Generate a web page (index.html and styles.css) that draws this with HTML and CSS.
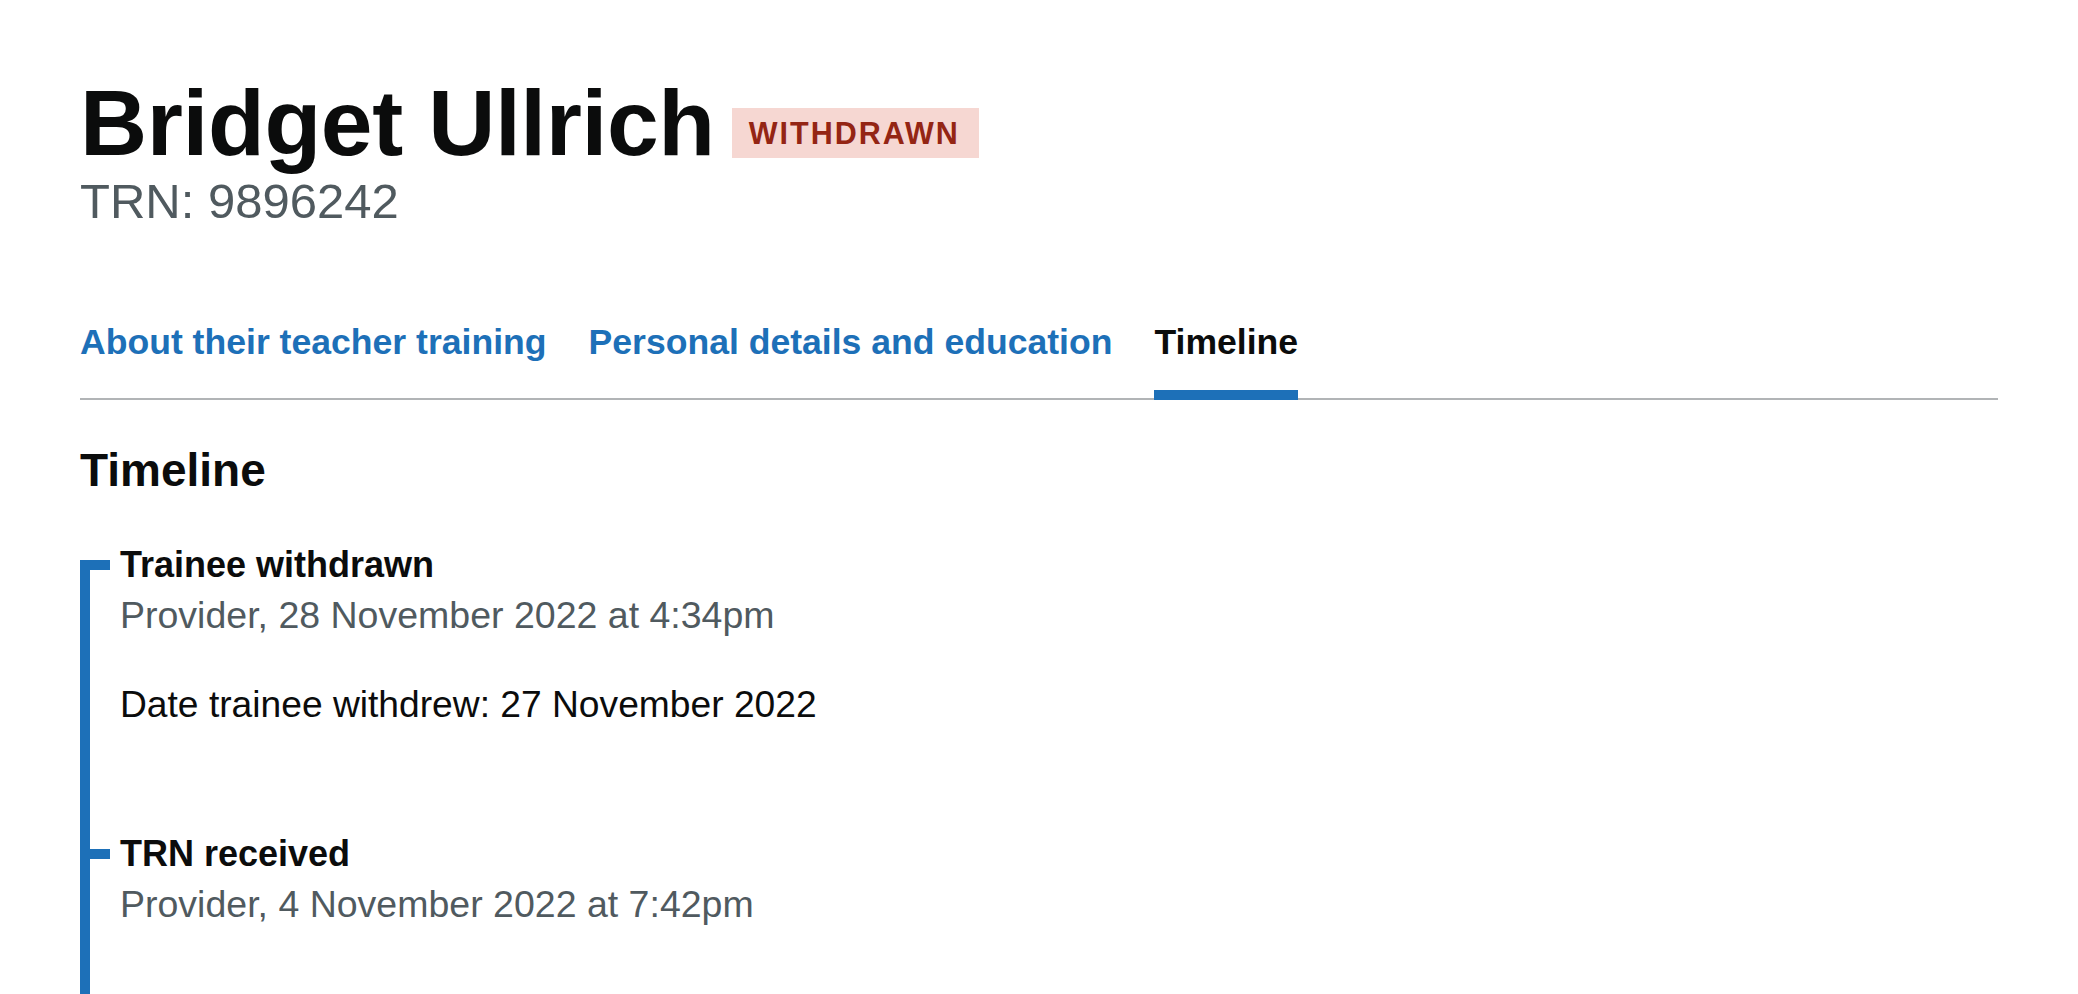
FILE: index.html
```html
<!DOCTYPE html>
<html lang="en">
<head>
<meta charset="utf-8">
<title>Bridget Ullrich - Timeline</title>
<link rel="stylesheet" href="styles.css">
</head>
<body>
<main class="page">
  <div class="title-row">
    <h1 class="name">Bridget Ullrich</h1>
    <strong class="tag tag--red">Withdrawn</strong>
  </div>
  <p class="trn">TRN: 9896242</p>

  <nav class="tabs" aria-label="Trainee sections">
    <a class="tab" href="#">About their teacher training</a>
    <a class="tab" href="#">Personal details and education</a>
    <a class="tab tab--active" href="#" aria-current="page">Timeline</a>
  </nav>

  <h2 class="section-title">Timeline</h2>

  <ol class="timeline">
    <li class="timeline-item">
      <h3 class="timeline-title">Trainee withdrawn</h3>
      <p class="timeline-date">Provider, 28 November 2022 at 4:34pm</p>
      <p class="timeline-desc">Date trainee withdrew: 27 November 2022</p>
    </li>
    <li class="timeline-item">
      <h3 class="timeline-title">TRN received</h3>
      <p class="timeline-date">Provider, 4 November 2022 at 7:42pm</p>
    </li>
  </ol>
</main>
</body>
</html>
```

FILE: styles.css
```css
html, body {
  margin: 0;
  padding: 0;
  background: #ffffff;
}

body {
  font-family: "Liberation Sans", Arial, sans-serif;
  color: #0b0c0c;
}

.page {
  padding: 73px 80px 0 80px;
}

.title-row {
  display: flex;
  align-items: flex-start;
}

.name {
  margin: 0;
  font-size: 93px;
  line-height: 100px;
  font-weight: 700;
  letter-spacing: -0.4px;
  color: #0b0c0c;
}

.tag {
  display: inline-block;
  margin: 35px 0 0 17px;
  padding: 0 19px 0 17px;
  height: 50px;
  line-height: 50px;
  font-size: 30.5px;
  font-weight: 700;
  letter-spacing: 2px;
  text-transform: uppercase;
}

.tag--red {
  background: #f6d7d2;
  color: #942514;
}

.trn {
  margin: 0;
  font-size: 49px;
  line-height: 56px;
  color: #505a5f;
}

.tabs {
  display: flex;
  gap: 42px;
  margin-top: 68px;
  border-bottom: 2px solid #b1b4b6;
}

.tab {
  display: block;
  padding: 20px 0 23px 0;
  margin-bottom: -2px;
  border-bottom: 10px solid transparent;
  font-size: 35.6px;
  line-height: 50px;
  font-weight: 700;
  color: #1d70b8;
  text-decoration: none;
}

.tab--active {
  color: #0b0c0c;
  border-bottom-color: #1d70b8;
}

.section-title {
  margin: 40px 0 40px 0;
  font-size: 46px;
  line-height: 60px;
  font-weight: 700;
}

.timeline {
  position: relative;
  list-style: none;
  margin: 0;
  padding: 0 0 60px 0;
}

.timeline::before {
  content: "";
  position: absolute;
  left: 0;
  top: 20px;
  bottom: 0;
  width: 10px;
  background: #1d70b8;
}

.timeline-item {
  position: relative;
  padding: 0 0 60px 40px;
}

.timeline-item::before {
  content: "";
  position: absolute;
  left: 0;
  top: 20px;
  width: 30px;
  height: 10px;
  background: #1d70b8;
}

.timeline-title {
  margin: 0;
  font-size: 36px;
  line-height: 50px;
  font-weight: 700;
}

.timeline-date {
  margin: 0;
  font-size: 37.5px;
  line-height: 50px;
  color: #505a5f;
}

.timeline-desc {
  margin: 39px 0 40px 0;
  font-size: 37.2px;
  line-height: 50px;
  color: #0b0c0c;
}
```
